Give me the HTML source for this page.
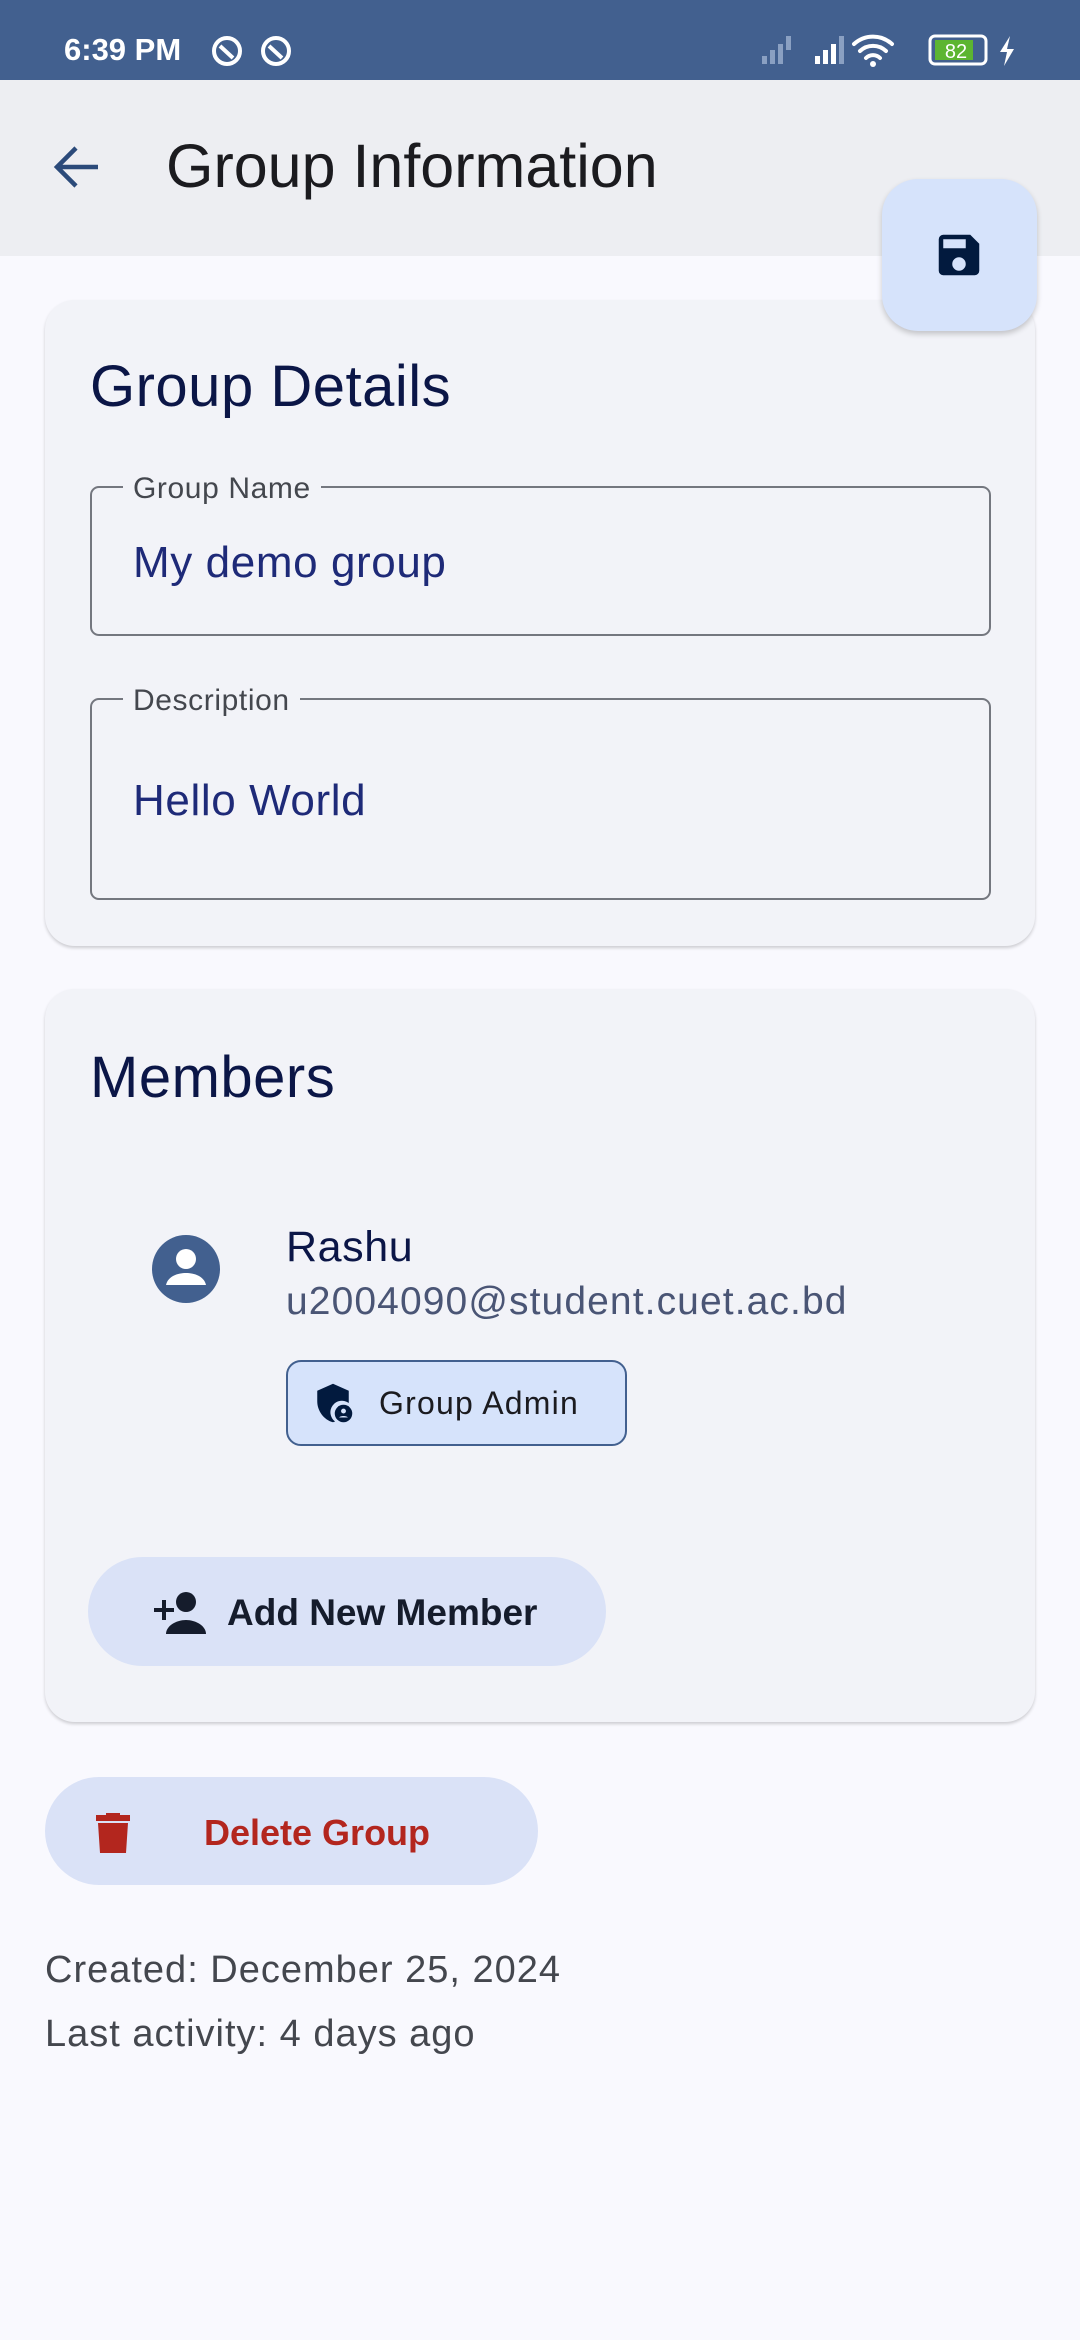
<!DOCTYPE html>
<html><head><meta charset="utf-8">
<style>
*{margin:0;padding:0;box-sizing:border-box}
body{width:1080px;height:2340px;background:#f9f9fe;font-family:"Liberation Sans",sans-serif;position:relative;overflow:hidden}
.a{position:absolute}
.sb{left:0;top:0;width:1080px;height:80px;background:#42608f}
.ab{left:0;top:80px;width:1080px;height:176px;background:#edeef2}
.card{background:#f2f3f8;border-radius:30px;box-shadow:0 2px 3px rgba(0,0,0,0.18)}
.t{white-space:nowrap;line-height:1}
.field{border:2px solid #74777f;border-radius:9px}
.lbl{background:#f2f3f8;padding:0 10px;font-size:30px;color:#44474e;letter-spacing:0.6px}
</style></head><body>
<div class="a sb"></div>
<div class="a t" style="left:64px;top:34px;font-size:31px;color:#fff;font-weight:bold">6:39 PM</div>
<svg class="a" style="left:210px;top:34px" width="90" height="34" viewBox="0 0 90 34"><g fill="none" stroke="#fff" stroke-width="4"><circle cx="17" cy="17" r="13"/><path d="M10 12l13 12"/><circle cx="66" cy="17" r="13"/><path d="M59 12l13 12"/></g></svg>
<svg class="a" style="left:760px;top:32px" width="260" height="36" viewBox="0 0 260 36"><g fill="#8aa0c2"><rect x="2" y="24" width="5" height="8"/><rect x="10" y="18" width="5" height="14"/><rect x="18" y="12" width="5" height="20"/><rect x="26" y="4" width="5" height="14"/></g><g fill="#fff"><rect x="55" y="24" width="5" height="8"/><rect x="63" y="18" width="5" height="14"/><rect x="71" y="12" width="5" height="20"/></g><rect x="79" y="4" width="5" height="28" fill="#8aa0c2"/><g fill="none" stroke="#fff" stroke-width="4" stroke-linecap="round"><path d="M94 12a28 28 0 0 1 38 0"/><path d="M100 19a19 19 0 0 1 26 0"/><path d="M106 26a10 10 0 0 1 14 0"/></g><circle cx="113" cy="32" r="3" fill="#fff"/><rect x="170" y="4" width="56" height="28" rx="5" fill="none" stroke="#fff" stroke-width="3"/><rect x="175" y="8" width="38" height="20" fill="#5cb531"/><text x="196" y="26" font-size="20" fill="#fff" text-anchor="middle" font-family="Liberation Sans">82</text><path d="M250 4l-10 16h7l-3 14 10-17h-7z" fill="#fff"/></svg>
<div class="a ab"></div>
<svg class="a" style="left:52px;top:144px" width="50" height="46" viewBox="0 0 50 46"><path d="M46 23H6M24 4L5 23l19 19" fill="none" stroke="#2b4a7a" stroke-width="4.5"/></svg>
<div class="a t" style="left:166px;top:136px;font-size:61px;color:#1b1b1f">Group Information</div>

<div class="a card" style="left:45px;top:300px;width:990px;height:646px"></div>
<div class="a t" style="left:90px;top:358px;font-size:58px;color:#0b1647;letter-spacing:0.5px">Group Details</div>
<div class="a field" style="left:90px;top:486px;width:901px;height:150px"></div>
<div class="a t lbl" style="left:123px;top:474px">Group Name</div>
<div class="a t" style="left:133px;top:541px;font-size:44px;color:#1e2a78;letter-spacing:0.6px">My demo group</div>
<div class="a field" style="left:90px;top:698px;width:901px;height:202px"></div>
<div class="a t lbl" style="left:123px;top:686px">Description</div>
<div class="a t" style="left:133px;top:779px;font-size:44px;color:#1e2a78;letter-spacing:0.6px">Hello World</div>

<div class="a" style="left:882px;top:179px;width:155px;height:152px;border-radius:36px;background:#d6e3fb;box-shadow:0 3px 6px rgba(0,0,0,0.2)"></div>
<svg class="a" style="left:932px;top:228px" width="54" height="54" viewBox="0 0 24 24"><path fill="#021a3e" d="M17 3H5a2 2 0 0 0-2 2v14a2 2 0 0 0 2 2h14a2 2 0 0 0 2-2V7zm-5 16a3 3 0 1 1 0-6 3 3 0 0 1 0 6zm3-10H5V5h10z"/></svg>

<div class="a card" style="left:45px;top:989px;width:990px;height:733px"></div>
<div class="a t" style="left:90px;top:1049px;font-size:58px;color:#0b1647;letter-spacing:0.5px">Members</div>
<svg class="a" style="left:152px;top:1235px" width="68" height="68" viewBox="0 0 68 68"><circle cx="34" cy="34" r="34" fill="#42608f"/><circle cx="34" cy="24" r="10" fill="#fff"/><path d="M14 50c2-9 12-12 20-12s18 3 20 12z" fill="#fff"/></svg>
<div class="a t" style="left:286px;top:1226px;font-size:43px;color:#0b1647;letter-spacing:0.6px">Rashu</div>
<div class="a t" style="left:286px;top:1282px;font-size:39px;color:#4a5575;letter-spacing:1.1px">u2004090@student.cuet.ac.bd</div>
<div class="a" style="left:286px;top:1360px;width:341px;height:86px;border-radius:15px;background:#d6e3fb;border:2px solid #42608f"></div>
<svg class="a" style="left:312px;top:1382px" width="42" height="42" viewBox="0 0 24 24"><path fill="#021a3e" d="M12 1L3 5v6c0 5.5 3.8 10.7 9 12 .4-.1.8-.2 1.2-.4A6 6 0 0 1 21 12V5z"/><circle cx="18" cy="18" r="5" fill="#021a3e"/><circle cx="18" cy="16.6" r="1.4" fill="#d6e3fb"/><path d="M15.5 20.3c.6-1.2 4.4-1.2 5 0z" fill="#d6e3fb"/></svg>
<div class="a t" style="left:379px;top:1387px;font-size:32px;color:#1b1b1f;letter-spacing:1.2px">Group Admin</div>
<div class="a" style="left:88px;top:1557px;width:518px;height:109px;border-radius:55px;background:#dae2f7"></div>
<svg class="a" style="left:154px;top:1590px" width="52" height="44" viewBox="0 0 26 22"><path fill="#151c2c" d="M0 9h4V5h2v4h4v2H6v4H4v-4H0z"/><circle cx="16" cy="6" r="5" fill="#151c2c"/><path d="M6 22c0-4 5-7 10-7s10 3 10 7z" fill="#151c2c"/></svg>
<div class="a t" style="left:227px;top:1594px;font-size:37px;color:#151c2c;font-weight:bold">Add New Member</div>

<div class="a" style="left:45px;top:1777px;width:493px;height:108px;border-radius:54px;background:#dae2f7"></div>
<svg class="a" style="left:96px;top:1813px" width="34" height="40" viewBox="0 0 17 20"><path fill="#b3261e" d="M5 0h7v1h5v3H0V1h5zM1 5h15l-1 15H2z"/></svg>
<div class="a t" style="left:204px;top:1815px;font-size:36px;color:#b3261e;font-weight:bold">Delete Group</div>
<div class="a t" style="left:45px;top:1951px;font-size:38px;color:#44474e;letter-spacing:1px">Created: December 25, 2024</div>
<div class="a t" style="left:45px;top:2015px;font-size:38px;color:#44474e;letter-spacing:1px">Last activity: 4 days ago</div>
</body></html>
